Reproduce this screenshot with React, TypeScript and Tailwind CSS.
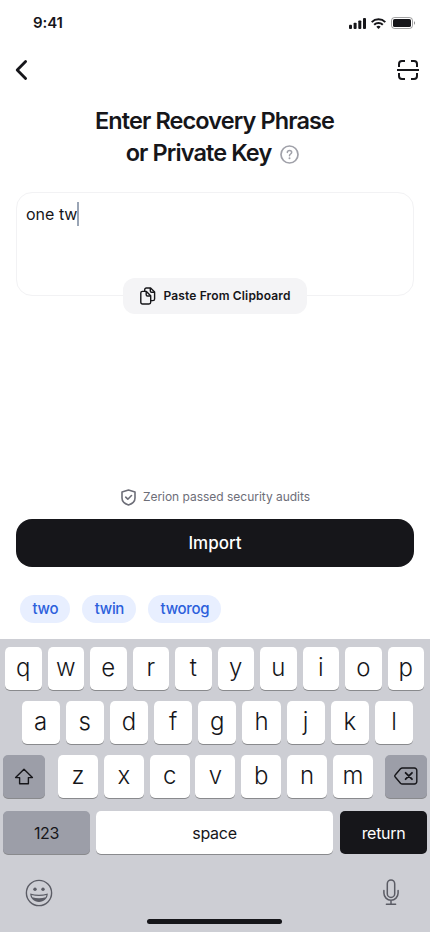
import React from 'react';

const ROW_ONE = ['q', 'w', 'e', 'r', 't', 'y', 'u', 'i', 'o', 'p'];
const ROW_TWO = ['a', 's', 'd', 'f', 'g', 'h', 'j', 'k', 'l'];
const ROW_THREE = ['z', 'x', 'c', 'v', 'b', 'n', 'm'];
const SUGGESTIONS = ['two', 'twin', 'tworog'];

function StatusBar() {
  return (
    <div className="h-[46px] pl-[33px] pr-[15px] flex items-center justify-between">
      <span className="text-[15px] leading-5 font-semibold tracking-[-0.1px]">9:41</span>
      <div className="flex items-center gap-[5px]">
        {/* Signal */}
        <svg width="17" height="11" viewBox="0 0 17 11" fill="currentColor">
          <rect x="0" y="6.7" width="3" height="4.3" rx="0.9" />
          <rect x="4.6" y="4.7" width="3" height="6.3" rx="0.9" />
          <rect x="9.3" y="2.4" width="3" height="8.6" rx="0.9" />
          <rect x="14" y="0" width="3" height="11" rx="0.9" />
        </svg>
        {/* Wi-Fi */}
        <svg width="15" height="11" viewBox="0 0 15 11" fill="none" stroke="currentColor" strokeWidth="2">
          <path d="M0.7 4.1a9.7 9.7 0 0 1 13.6 0" />
          <path d="M3.2 6.7a6.1 6.1 0 0 1 8.6 0" />
          <path d="M7.5 11 5.3 8.8a3.2 3.2 0 0 1 4.4 0z" fill="currentColor" stroke="none" />
        </svg>
        {/* Battery */}
        <svg width="24" height="12" viewBox="0 0 24 12" fill="none">
          <rect x="0.5" y="0.5" width="21" height="11" rx="3" stroke="#16161a" strokeOpacity="0.4" />
          <rect x="2" y="2" width="18" height="8" rx="1.6" fill="#16161a" />
          <path d="M23 4.2v3.6c.6-.3 1-1 1-1.8s-.4-1.5-1-1.8z" fill="#16161a" fillOpacity="0.5" />
        </svg>
      </div>
    </div>
  );
}

function NavBar() {
  return (
    <div className="h-12 pl-[15px] pr-[11px] flex items-center justify-between">
      <button aria-label="Back">
        <svg width="13" height="22" viewBox="0 0 13 22" fill="none" stroke="currentColor" strokeWidth="2.8" strokeLinecap="round" strokeLinejoin="round">
          <path d="M10.6 2.4 2.2 11l8.4 8.6" />
        </svg>
      </button>
      <button aria-label="Scan">
        <svg width="22" height="22" viewBox="0 0 22 22" fill="none" stroke="currentColor" strokeWidth="2">
          <path d="M0 11h22" />
          <path d="M2 8V5a3 3 0 0 1 3-3h3M14 2h3a3 3 0 0 1 3 3v3M20 14v3a3 3 0 0 1-3 3h-3M8 20H5a3 3 0 0 1-3-3v-3" />
        </svg>
      </button>
    </div>
  );
}

function Key({ label, className }: { label: string; className: string }) {
  return (
    <button
      className={`h-[43px] rounded-[5px] bg-white pb-px text-[24px] font-light leading-none shadow-[0_1px_0_#898a8d] flex items-center justify-center ${className}`}
    >
      {label}
    </button>
  );
}

function Keyboard() {
  return (
    <div className="h-[293px] bg-[#cdced4] pt-2">
      <div className="pl-[5px] pr-[6px] flex gap-[6px]">
        {ROW_ONE.map((k) => (
          <Key key={k} label={k} className="flex-1" />
        ))}
      </div>

      <div className="mt-[11px] pl-[21.5px] pr-[17px] flex gap-[6px]">
        {ROW_TWO.map((k) => (
          <Key key={k} label={k} className="flex-1" />
        ))}
      </div>

      <div className="mt-[11px] px-[3px] flex">
        <button aria-label="Shift" className="w-[42px] h-[43px] rounded-[5px] bg-[#9c9ea8] shadow-[0_1px_0_#898a8d] flex items-center justify-center">
          <svg width="20" height="18" viewBox="0 0 20 18" fill="none" stroke="currentColor" strokeWidth="1.4" strokeLinejoin="round">
            <path d="M10 1.2 1.6 9.6h4v6.2h8.8V9.6h4z" />
          </svg>
        </button>
        <div className="ml-[13px] mr-3 flex flex-1 justify-between">
          {ROW_THREE.map((k) => (
            <Key key={k} label={k} className="w-10" />
          ))}
        </div>
        <button aria-label="Delete" className="w-[42px] h-[43px] rounded-[5px] bg-[#9c9ea8] pb-0.5 shadow-[0_1px_0_#898a8d] flex items-center justify-center">
          <svg width="24" height="18" viewBox="0 0 24 18" fill="none" stroke="currentColor" strokeWidth="1.4" strokeLinecap="round" strokeLinejoin="round">
            <path d="M8.4 1h12a2.4 2.4 0 0 1 2.4 2.4v11.2a2.4 2.4 0 0 1-2.4 2.4h-12c-.8 0-1.4-.3-1.9-.8L1.2 10a1.3 1.3 0 0 1 0-2l5.3-6.2C7 1.3 7.6 1 8.4 1z" />
            <path d="m11.6 5.8 6.4 6.4M18 5.8l-6.4 6.4" strokeWidth="1.8" />
          </svg>
        </button>
      </div>

      <div className="mt-[13px] px-[3px] flex text-base tracking-[-0.3px]">
        <button className="w-[87px] h-[43px] rounded-[5px] bg-[#9c9ea8] shadow-[0_1px_0_#898a8d]">123</button>
        <button className="ml-[6px] w-[237px] h-[43px] rounded-[5px] bg-white shadow-[0_1px_0_#898a8d]">space</button>
        <button className="ml-[7px] w-[87px] h-[43px] rounded-[5px] bg-[#16161a] text-white">return</button>
      </div>

      <div className="mt-[25px] pl-[25px] pr-[31px] flex items-start justify-between text-[#5b5c65]">
        <svg width="28" height="28" viewBox="0 0 28 28" fill="none" stroke="currentColor" strokeWidth="1.4">
          <circle cx="14" cy="14" r="12.6" />
          <circle cx="10" cy="10.2" r="1.7" fill="currentColor" stroke="none" />
          <circle cx="18" cy="10.2" r="1.7" fill="currentColor" stroke="none" />
          <path d="M5.2 14.6c2.8.8 5.8 1.2 8.8 1.2s6-.4 8.8-1.2c-.1 4.9-3.8 8.4-8.8 8.4s-8.7-3.5-8.8-8.4z" fill="currentColor" stroke="none" />
          <path d="M6.5 16.1c2.4.6 4.9.9 7.5.9s5.1-.3 7.5-.9l-.8 2.2c-2.1.6-4.4.9-6.7.9s-4.600-.3-6.700-.9z" fill="#cdced4" stroke="none" />
        </svg>
        <svg width="16" height="27" viewBox="0 0 16 27" fill="none" stroke="currentColor" strokeWidth="1.5" strokeLinecap="round">
          <rect x="4.3" y="1" width="7.4" height="17.4" rx="3.7" />
          <path d="M.9 11.5v2.6a7.1 7.1 0 0 0 14.2 0v-2.6M8 21.3v4M3.4 25.3h9.2" />
        </svg>
      </div>

      <div className="ml-[147px] mt-[12px] h-[5px] w-[135px] rounded-full bg-[#16161a]" />
    </div>
  );
}

export default function App() {
  return (
    <div className="w-[430px] h-[932px] overflow-hidden bg-white text-[#16161a] font-['Inter',sans-serif]">
      <StatusBar />
      <NavBar />

      {/* Title */}
      <h1 className="mt-[11px] pr-px text-center text-[23.5px] leading-8 font-semibold tracking-[-0.9px]">
        Enter Recovery Phrase
        <span className="flex items-center justify-center gap-[9px] pr-[4px]">
          or Private Key
          <svg className="mt-[2px]" width="19" height="19" viewBox="0 0 19 19" fill="none" stroke="#a0a1a9" strokeWidth="1.7" strokeLinecap="round">
            <circle cx="9.5" cy="9.5" r="8.5" />
            <path d="M7.3 7.4c.1-1.3 1-2 2.2-2s2.2.8 2.2 1.9c0 1.7-2.2 1.7-2.2 3.4" strokeWidth="1.5" />
            <circle cx="9.5" cy="13.3" r="1" fill="#a0a1a9" stroke="none" />
          </svg>
        </span>
      </h1>

      {/* Phrase input */}
      <div className="relative mt-[23px] mx-4 h-[104px] rounded-2xl border border-[#f2f2f4] pl-[9px] pt-[9px]">
        <div className="flex h-6 items-center text-base">
          one tw
          <span className="h-6 w-[2px] bg-[#9aa5b5]" />
        </div>
        <button className="absolute left-[106px] top-[85px] w-[184px] h-9 rounded-xl bg-[#f4f4f6] flex items-center justify-center gap-[7px] pl-px text-xs font-semibold tracking-[0.15px]">
          <svg width="16" height="18" viewBox="0 0 16 18" fill="none" stroke="currentColor" strokeWidth="1.4" strokeLinejoin="round">
            <path d="M4.7 4V2.7c0-1 .7-1.7 1.7-1.7h4.2l4 4v6.9c0 1-.7 1.7-1.7 1.7h-2" />
            <path d="M10.3 1v2.9c0 .8.5 1.3 1.3 1.3h3" />
            <path d="M2.5 4.4h3.9l4.3 4.3v6.6c0 1-.7 1.7-1.7 1.7H2.5c-1 0-1.7-.7-1.7-1.7V6.1c0-1 .7-1.7 1.7-1.7z" />
            <path d="M6.2 4.5v3.2c0 .8.5 1.3 1.3 1.3h3" />
          </svg>
          Paste From Clipboard
        </button>
      </div>

      {/* Import */}
      <div className="mt-[191px] h-5 flex items-center justify-center gap-[7px] pl-px text-xs tracking-[-0.02px] text-[#6d6e78]">
        <svg width="15" height="17" viewBox="0 0 15 17" fill="none" stroke="currentColor" strokeWidth="1.6" strokeLinecap="round" strokeLinejoin="round">
          <path d="M7.5 1 14 3v6c0 3.4-3.2 5.9-6.5 7C4.2 14.9 1 12.4 1 9V3z" />
          <path d="m4.7 8.2 2.1 2 3.7-3.7" />
        </svg>
        Zerion passed security audits
      </div>
      <button className="mt-3 mx-4 w-[398px] h-12 rounded-2xl bg-[#16161a] pt-0.5 text-[17px] font-medium text-white">
        Import
      </button>

      {/* Word suggestions */}
      <div className="mt-7 mb-4 ml-5 flex gap-3">
        {SUGGESTIONS.map((word) => (
          <button key={word} className="h-7 pl-[12.5px] pr-3 rounded-full bg-[#e8efff] text-[15px] font-medium tracking-[-0.3px] text-[#2c60dc]">
            {word}
          </button>
        ))}
      </div>

      <Keyboard />
    </div>
  );
}
